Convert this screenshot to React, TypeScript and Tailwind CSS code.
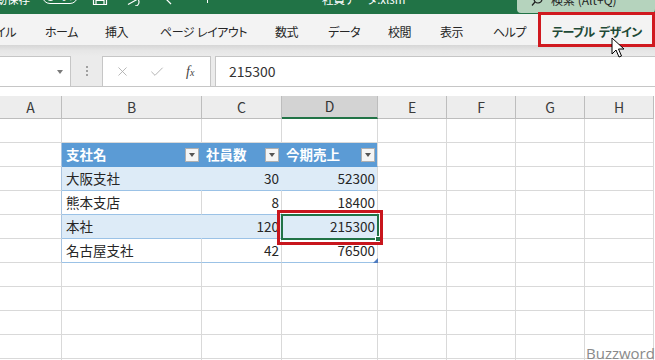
import React from "react";
import { X, Check } from "lucide-react";

const GRID = "grid grid-cols-[62px_140px_80px_96px_69px_69px_69px_69px]";

function TitleBar() {
  return (
    <div className="h-[14px] bg-[#217346] overflow-hidden">
      <div className="flex items-center h-[26px] -mt-[13px] text-white text-[11.5px] [font-feature-settings:'palt']">
        <div className="w-[30px] shrink-0 flex justify-end">
          <span className="whitespace-nowrap shrink-0">自動保存</span>
        </div>
        <div className="ml-[12px] w-[36px] h-[16px] shrink-0 rounded-full border border-white flex items-center gap-[4px] pl-[3px] -translate-y-[4px]">
          <div className="w-[9px] h-[9px] rounded-full bg-white" />
          <span className="text-[10px] leading-none">オフ</span>
        </div>
        <svg className="ml-[14px] shrink-0 -translate-y-[2px]" width="16" height="16" viewBox="0 0 16 16" fill="none" stroke="white" strokeWidth="1.2">
          <path d="M1.5 1.5h11l2 2v11h-13z" />
          <path d="M4 14.5v-4h8v4" />
          <path d="M4 1.5v3h6v-3" />
        </svg>
        <svg className="ml-[19px] shrink-0 -translate-y-[1px]" width="14" height="14" viewBox="0 0 14 14" fill="none" stroke="white" strokeWidth="1.2">
          <path d="M2 6l4-4" />
          <path d="M2 6h6a4 4 0 0 1 0 8" />
          <path d="M1 12.5l9-5" />
        </svg>
        <svg className="ml-[19px] shrink-0 -translate-y-[1px]" width="14" height="14" viewBox="0 0 14 14" fill="none" stroke="white" strokeWidth="1.2">
          <path d="M12 6l-4-4" />
          <path d="M1 2l10 10" />
        </svg>
        <div className="ml-[33px] w-[1px] h-[8px] bg-white shrink-0 -translate-y-[1px]" />
        <div className="ml-[114px] shrink-0 whitespace-nowrap">社員データ.xlsm</div>
        <div className="ml-auto w-[138px] h-[26px] shrink-0 rounded-[4px] bg-[#b5d3bd] flex items-center text-[#1f1f1f] text-[12px]">
          <svg className="ml-[14px] shrink-0" width="12" height="12" viewBox="0 0 12 12" fill="none" stroke="#1f1f1f" strokeWidth="1.2">
            <circle cx="7" cy="5" r="4" />
            <path d="M4 8l-3 3.5" />
          </svg>
          <span className="ml-[8px] whitespace-nowrap">検索 (Alt+Q)</span>
        </div>
      </div>
    </div>
  );
}

function Tabs() {
  return (
    <div className="h-[31px] bg-[#f3f3f3] flex items-center pt-[4px] text-[12px] tracking-[-0.5px] text-[#262626] [font-feature-settings:'palt'] whitespace-nowrap">
      <div className="w-[45px] shrink-0">
        <div className="w-[16px] flex justify-end">
          <span className="shrink-0">ファイル</span>
        </div>
      </div>
      <div className="w-[60px] shrink-0">ホーム</div>
      <div className="w-[55px] shrink-0">挿入</div>
      <div className="w-[115px] shrink-0 flex gap-[3px]"><span>ページ</span><span>レイアウト</span></div>
      <div className="w-[53px] shrink-0">数式</div>
      <div className="w-[60px] shrink-0">データ</div>
      <div className="w-[52px] shrink-0">校閲</div>
      <div className="w-[53px] shrink-0">表示</div>
      <div className="w-[59px] shrink-0">ヘルプ</div>
      <div className="shrink-0 flex gap-[4px] font-bold text-[#1e4a36]"><span>テーブル</span><span>デザイン</span></div>
    </div>
  );
}

function FormulaBar() {
  return (
    <div className="h-[31px] flex bg-[#ebebeb] border-b border-[#c6c6c6]">
      <div className="w-[71px] h-[30px] shrink-0 bg-white border-t border-r border-[#c6c6c6] flex items-center justify-end pr-[7px]">
        <div className="w-0 h-0 border-l-[3.5px] border-r-[3.5px] border-t-[4px] border-l-transparent border-r-transparent border-t-[#7a7a7a]" />
      </div>
      <div className="w-[31px] shrink-0 flex flex-col items-center justify-center gap-[2px] pl-[1px]">
        <div className="w-[2px] h-[2px] bg-[#a0a0a0]" />
        <div className="w-[2px] h-[2px] bg-[#a0a0a0]" />
        <div className="w-[2px] h-[2px] bg-[#a0a0a0]" />
      </div>
      <div className="w-[109px] h-[30px] shrink-0 bg-white border-t border-x border-[#c6c6c6] flex items-center">
        <X className="ml-[12px]" size={15} strokeWidth={1.3} color="#a8a8a8" />
        <Check className="ml-[19px]" size={16} strokeWidth={1.3} color="#a8a8a8" />
        <span className="ml-[21px] font-['Liberation_Serif',serif] italic text-[14px] text-[#444] leading-none">
          f<span className="text-[10px]">x</span>
        </span>
      </div>
      <div className="ml-[4px] flex-1 h-[30px] bg-white border-t border-l border-[#c6c6c6] flex items-center pl-[13px] text-[14px] text-[#333]">
        215300
      </div>
    </div>
  );
}

function ColumnHeaders() {
  const base = "h-[23px] flex items-center justify-center border-r border-b border-[#bdbdbd] bg-[#ededed] text-[14px] text-[#3a3a3a]";
  return (
    <div className={GRID}>
      <div className={base}>A</div>
      <div className={base}>B</div>
      <div className={base}>C</div>
      <div className="h-[23px] flex items-center justify-center border-r border-[#bdbdbd] border-b-2 border-b-[#217346] bg-[#d3d3d3] text-[14px] text-[#333]">D</div>
      <div className={base}>E</div>
      <div className={base}>F</div>
      <div className={base}>G</div>
      <div className={base}>H</div>
    </div>
  );
}

function FilterBtn() {
  return (
    <div className="w-[14px] h-[14px] mt-[5px] shrink-0 bg-[#f5f5f5] border border-[#b0b0b0] flex items-center justify-center">
      <div className="w-0 h-0 border-l-[3.5px] border-r-[3.5px] border-t-[4px] border-l-transparent border-r-transparent border-t-[#555]" />
    </div>
  );
}

const data = [
  ["大阪支社", "30", "52300"],
  ["熊本支店", "8", "18400"],
  ["本社", "120", "215300"],
  ["名古屋支社", "42", "76500"],
];

function Grid() {
  const plain = "h-[24px] border-r border-b border-[#d9d9d9]";
  const aTable = "h-[24px] border-r border-b border-[#d9d9d9] border-r-[#a9c4e0]";
  const hdrMid = "h-[24px] bg-[#5b9bd5] border-r border-b border-[#5b9bd5] flex justify-between pl-[4px] pr-[2px] text-white font-bold text-[13.5px] leading-[23px]";
  const hdrLast = "h-[24px] bg-[#5b9bd5] border-b border-[#5b9bd5] border-r border-r-[#d9d9d9] flex justify-between pl-[4px] pr-[2px] text-white font-bold text-[13.5px] leading-[23px]";
  const bandName = "h-[24px] bg-[#ddebf7] border-b border-[#9bc2e6] border-r border-r-[#ddebf7] flex items-center pl-[4px] text-[13.5px]";
  const bandNum = "h-[24px] bg-[#ddebf7] border-b border-[#9bc2e6] border-r border-r-[#ddebf7] flex items-center justify-end pr-[2px] text-[13.5px]";
  const bandNumLast = "h-[24px] bg-[#ddebf7] border-b border-[#9bc2e6] border-r border-r-[#d9d9d9] flex items-center justify-end pr-[2px] text-[13.5px]";
  const whiteName = "h-[24px] bg-white border-b border-[#9bc2e6] border-r border-r-[#d9d9d9] flex items-center pl-[4px] text-[13.5px]";
  const whiteNum = "h-[24px] bg-white border-b border-[#9bc2e6] border-r border-r-[#d9d9d9] flex items-center justify-end pr-[2px] text-[13.5px]";

  const rows: React.ReactNode[] = [];
  for (let r = 1; r <= 11; r++) {
    const cells: React.ReactNode[] = [];
    if (r === 2) {
      cells.push(<div key="a" className={aTable} />);
      cells.push(<div key="b" className={hdrMid}><span>支社名</span><FilterBtn /></div>);
      cells.push(<div key="c" className={hdrMid}><span>社員数</span><FilterBtn /></div>);
      cells.push(<div key="d" className={hdrLast}><span>今期売上</span><FilterBtn /></div>);
    } else if (r >= 3 && r <= 6) {
      const row = data[r - 3];
      const band = r === 3 || r === 5;
      cells.push(<div key="a" className={aTable} />);
      cells.push(<div key="b" className={band ? bandName : whiteName}>{row[0]}</div>);
      cells.push(<div key="c" className={band ? bandNum : whiteNum}>{row[1]}</div>);
      cells.push(<div key="d" className={band ? bandNumLast : whiteNum}>{row[2]}</div>);
    } else {
      cells.push(<div key="a" className={plain} />);
      cells.push(<div key="b" className={plain} />);
      cells.push(<div key="c" className={plain} />);
      cells.push(<div key="d" className={plain} />);
    }
    cells.push(<div key="e" className={plain} />);
    cells.push(<div key="f" className={plain} />);
    cells.push(<div key="g" className={plain} />);
    cells.push(<div key="h" className={plain} />);
    rows.push(<React.Fragment key={r}>{cells}</React.Fragment>);
  }
  return <div className={`${GRID} text-[#262626]`}>{rows}</div>;
}

export default function App() {
  return (
    <div className="relative w-[655px] h-[360px] overflow-hidden bg-white font-['Noto_Sans_CJK_JP','Noto_Sans',sans-serif] text-[#262626]">
      <TitleBar />
      <Tabs />
      <div className="h-[11px] bg-gradient-to-b from-[#d6d6d6] via-[#e6e6e6] to-[#ebebeb]" />
      <FormulaBar />
      <div className="h-[9px] bg-white" />
      <ColumnHeaders />
      <Grid />

      {/* annotation: ribbon tab */}
      <div className="absolute left-[538px] top-[12px] w-[117px] h-[35px] border-[3px] border-[#d0191f]" />
      {/* mouse cursor */}
      <svg className="absolute left-[611px] top-[37px]" width="14" height="22" viewBox="0 0 14 22">
        <path d="M1 1 L1 17 L5 13 L8 20 L10.5 19 L7.5 12 L13 12 Z" fill="white" stroke="black" strokeWidth="1" strokeLinejoin="round" />
      </svg>

      {/* selected cell */}
      <div className="absolute left-[281px] top-[214px] w-[98px] h-[26px] border-2 border-[#217346]" />
      <div className="absolute left-[375px] top-[236px] w-[6px] h-[6px] bg-[#217346] border border-white" />
      {/* annotation: cell */}
      <div className="absolute left-[277px] top-[210px] w-[106px] h-[35px] border-[3px] border-[#c8161d]" />

      {/* table resize handle */}
      <svg className="absolute left-[373px] top-[258px]" width="5" height="5" viewBox="0 0 5 5">
        <path d="M5 0 L5 5 L0 5 Z" fill="#4f7cc0" />
      </svg>

      {/* watermark */}
      <div className="absolute left-[586px] top-[346px] font-['Open_Sans',sans-serif] text-[15px] leading-none text-[#8a8a8a]">Buzzword</div>
    </div>
  );
}
